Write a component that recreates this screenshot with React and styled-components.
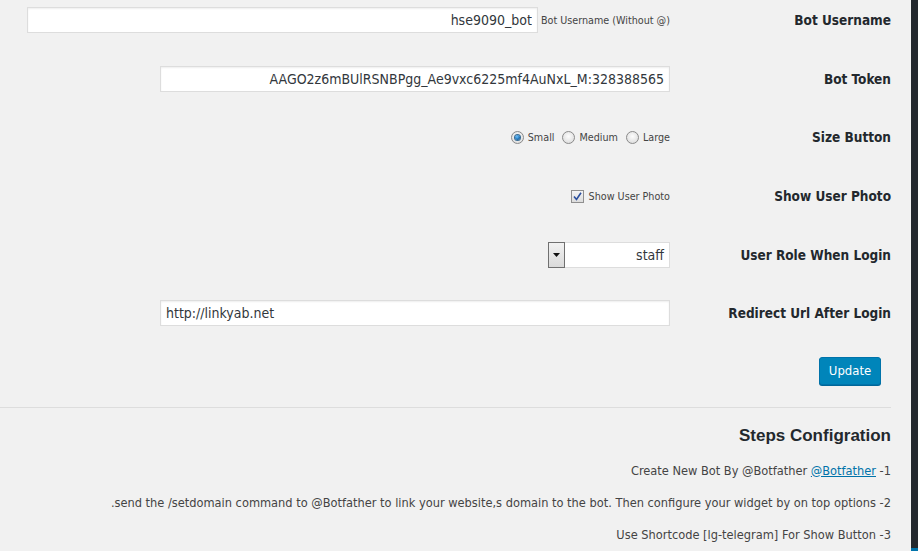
import React from "react";
import styled, { createGlobalStyle } from "styled-components";

const GlobalStyle = createGlobalStyle`
  html, body {
    margin: 0;
    padding: 0;
    height: 100%;
    overflow: hidden;
    background: #f1f1f1;
  }
  #root {
    height: 100%;
  }
`;

const Page = styled.div`
  display: flex;
  width: 918px;
  height: 551px;
  font-family: "DejaVu Sans Condensed", "DejaVu Sans", sans-serif;
  color: #444;
`;

const Content = styled.main`
  flex: 1;
  background: #f1f1f1;
  padding-right: 20px;
  overflow: hidden;
`;

const AdminMenu = styled.aside`
  width: 7px;
  background: #23282d;
  display: flex;
  flex-direction: column;
  justify-content: flex-end;
`;

const ActiveItem = styled.div`
  height: 3px;
  background: #0073aa;
`;

const FormTable = styled.div`
  margin-top: -9px;
`;

const Row = styled.div`
  display: flex;
  align-items: center;
  height: 58.6px;
`;

const Field = styled.div`
  flex: 1;
  display: flex;
  justify-content: flex-end;
  align-items: center;
  gap: ${(p) => p.$gap || 0}px;
  padding-right: 21px;
`;

const Label = styled.div`
  width: 200px;
  text-align: right;
  font-weight: bold;
  font-size: 13.5px;
  color: #23282d;
`;

const TextInput = styled.input`
  box-sizing: border-box;
  width: ${(p) => p.$width}px;
  height: 26px;
  padding: 0 5px;
  border: 1px solid #ddd;
  box-shadow: inset 0 1px 2px rgba(0, 0, 0, 0.07);
  background: #fff;
  font-family: inherit;
  font-size: 14px;
  color: #32373c;
  text-align: ${(p) => p.$align || "left"};
  outline: none;
`;

const Description = styled.span`
  font-size: 10.7px;
  color: #444;
`;

const Option = styled.label`
  display: flex;
  align-items: center;
  gap: ${(p) => p.$gap || 4}px;
  font-size: 10.7px;
  color: #444;
`;

const RadioDot = styled.span`
  box-sizing: border-box;
  width: 13px;
  height: 13px;
  border-radius: 50%;
  border: 1px solid #8a8a8a;
  background: radial-gradient(circle at 50% 40%, #fdfdfd 0%, #e2e2e2 70%, #cfcfcf 100%);
  display: flex;
  align-items: center;
  justify-content: center;

  &::after {
    content: "";
    display: ${(p) => (p.$checked ? "block" : "none")};
    width: 5px;
    height: 5px;
    border-radius: 50%;
    background: radial-gradient(circle at 40% 35%, #6fc3ff 0%, #1a6fb3 60%, #0b3f6e 100%);
    box-shadow: 0 0 0 1px #3a6c93;
  }
`;

const CheckBox = styled.span`
  box-sizing: border-box;
  width: 13px;
  height: 13px;
  border: 1px solid #8f8f8f;
  background: linear-gradient(#f4f4f4, #dcdcdc);
  display: flex;
  align-items: center;
  justify-content: center;
`;

const Select = styled.div`
  display: flex;
  height: 26px;
  width: 122px;
`;

const SelectArrow = styled.span`
  box-sizing: border-box;
  width: 17px;
  height: 26px;
  border: 1px solid #707070;
  background: linear-gradient(#f2f2f2, #dadada);
  display: flex;
  align-items: center;
  justify-content: center;
`;

const SelectValue = styled.span`
  box-sizing: border-box;
  flex: 1;
  height: 26px;
  border: 1px solid #ddd;
  border-left: none;
  background: #fff;
  font-size: 14px;
  color: #32373c;
  text-align: right;
  padding-right: 5px;
  line-height: 24px;
`;

const ButtonRow = styled.div`
  display: flex;
  justify-content: flex-end;
  padding-right: 10px;
  margin-top: 14px;
`;

const Button = styled.button`
  width: 62px;
  height: 28px;
  padding: 0;
  border: 1px solid #0073aa;
  border-radius: 3px;
  background: #0085ba;
  box-shadow: 0 1px 0 #006799;
  color: #fff;
  font-family: inherit;
  font-size: 13px;
`;

const Divider = styled.div`
  height: 1px;
  background: #ddd;
  margin-top: 22px;
`;

const StepsTitle = styled.h2`
  margin: 17px 0 8px;
  text-align: right;
  font-family: "Liberation Sans", Arial, sans-serif;
  font-size: 17px;
  line-height: 22px;
  color: #23282d;
`;

const Step = styled.p`
  margin: 0;
  text-align: right;
  font-size: 12.7px;
  line-height: 32px;
  color: #444;
`;

const BotLink = styled.a`
  color: #0073aa;
  text-decoration: underline;
`;

const Radio = ({ checked, children }) => (
  <Option>
    <RadioDot $checked={checked} />
    {children}
  </Option>
);

export default function App() {
  return (
    <Page>
      <GlobalStyle />
      <Content>
        <FormTable>
          <Row>
            <Field $gap={3}>
              <TextInput $width={511} $align="right" defaultValue="hse9090_bot" readOnly />
              <Description>Bot Username (Without @)</Description>
            </Field>
            <Label>Bot Username</Label>
          </Row>
          <Row>
            <Field>
              <TextInput
                $width={510}
                $align="right"
                defaultValue="AAGO2z6mBUlRSNBPgg_Ae9vxc6225mf4AuNxL_M:328388565"
                readOnly
              />
            </Field>
            <Label>Bot Token</Label>
          </Row>
          <Row>
            <Field $gap={8}>
              <Radio checked>Small</Radio>
              <Radio>Medium</Radio>
              <Radio>Large</Radio>
            </Field>
            <Label>Size Button</Label>
          </Row>
          <Row>
            <Field>
              <Option $gap={5}>
                <CheckBox>
                  <svg width="9" height="9" viewBox="0 0 9 9">
                    <path d="M1 4.5 L3.5 7.5 L8 0.8" fill="none" stroke="#2b4f9e" strokeWidth="1.6" />
                  </svg>
                </CheckBox>
                Show User Photo
              </Option>
            </Field>
            <Label>Show User Photo</Label>
          </Row>
          <Row>
            <Field>
              <Select>
                <SelectArrow>
                  <svg width="7" height="4" viewBox="0 0 7 4">
                    <path d="M0 0 H7 L3.5 4 Z" fill="#111" />
                  </svg>
                </SelectArrow>
                <SelectValue>staff</SelectValue>
              </Select>
            </Field>
            <Label>User Role When Login</Label>
          </Row>
          <Row>
            <Field>
              <TextInput $width={510} defaultValue="http://linkyab.net" readOnly />
            </Field>
            <Label>Redirect Url After Login</Label>
          </Row>
        </FormTable>
        <ButtonRow>
          <Button>Update</Button>
        </ButtonRow>
        <Divider />
        <StepsTitle>Steps Configration</StepsTitle>
        <Step>
          Create New Bot By @Botfather <BotLink href="#">@Botfather</BotLink> -1
        </Step>
        <Step>
          .send the /setdomain command to @Botfather to link your website,s domain to the bot. Then
          configure your widget by on top options -2
        </Step>
        <Step>Use Shortcode [lg-telegram] For Show Button -3</Step>
      </Content>
      <AdminMenu>
        <ActiveItem />
      </AdminMenu>
    </Page>
  );
}
